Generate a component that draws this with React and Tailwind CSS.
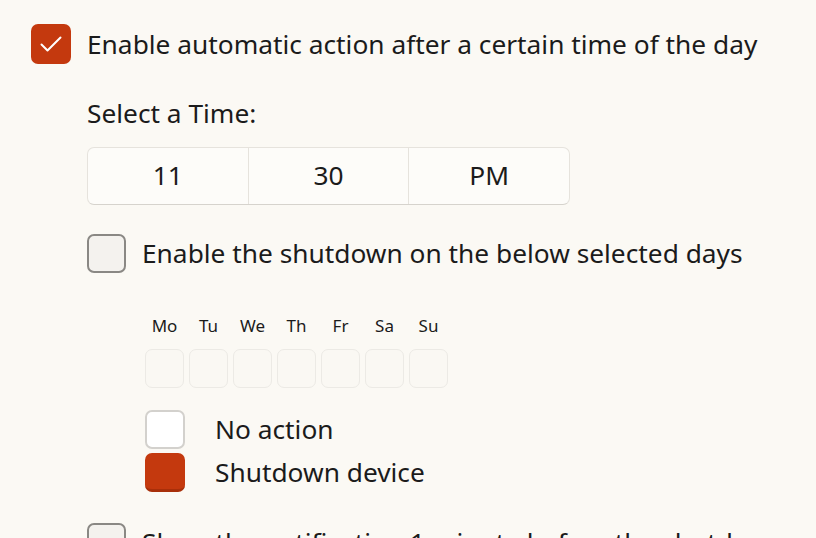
import React from "react";

const font = { fontFamily: '"Noto Sans", "Open Sans", sans-serif' };

function Check() {
  return (
    <svg width="22" height="16" viewBox="0 0 22 16" fill="none">
      <path d="M1.5 8.5l6 6L20.5 1.5" stroke="white" strokeWidth="2" strokeLinecap="round" strokeLinejoin="round" />
    </svg>
  );
}

export default function App() {
  const days = ["Mo", "Tu", "We", "Th", "Fr", "Sa", "Su"];
  return (
    <div className="w-[816px] h-[538px] overflow-hidden bg-[#fbf9f4] text-[#1b1b1b]" style={font}>
      <div className="pl-[31px] pt-[24px]">
        <div className="flex items-center gap-[16px] h-[40px]">
          <div className="w-[40px] h-[40px] rounded-[7px] bg-[#c4390e] flex items-center justify-center">
            <Check />
          </div>
          <span className="text-[26.3px] leading-none">Enable automatic action after a certain time of the day</span>
        </div>

        <div className="pl-[56px]">
          <div className="mt-[30px] h-[40px] flex items-center text-[26.3px]">Select a Time:</div>

          <div className="mt-[13px] w-[483px] h-[58px] flex rounded-[7px] border border-[#e6e3dd] border-b-[#d6d3cd] bg-[#fdfcf9] text-[26.3px]">
            <div className="flex-1 flex items-center justify-center border-r border-[#e6e3dd]">11</div>
            <div className="flex-1 flex items-center justify-center border-r border-[#e6e3dd]">30</div>
            <div className="flex-1 flex items-center justify-center">PM</div>
          </div>

          <div className="mt-[29px] flex items-center gap-[16px] h-[39px]">
            <div className="w-[39px] h-[39px] rounded-[7px] border-2 border-[#8a8884] bg-[#f4f2ee]" />
            <span className="text-[26.3px] leading-none">Enable the shutdown on the below selected days</span>
          </div>

          <div className="pl-[58px] mt-[40px]">
            <div className="flex gap-[5px]">
              {days.map((d) => (
                <div key={d} className="w-[39px] flex flex-col items-center">
                  <div className="h-[26px] flex items-center text-[17px]">{d}</div>
                </div>
              ))}
            </div>
            <div className="flex gap-[5px] mt-[10px]">
              {days.map((d) => (
                <div key={d} className="w-[39px] h-[39px] rounded-[7px] border border-[#eceae5] bg-[#faf8f3]" />
              ))}
            </div>

            <div className="mt-[22px] flex items-center gap-[30px] h-[39px]">
              <div className="w-[40px] h-[39px] rounded-[7px] border-2 border-[#d3d1cd] bg-white" />
              <span className="text-[26.3px] leading-none">No action</span>
            </div>
            <div className="mt-[4px] flex items-center gap-[30px] h-[39px]">
              <div className="w-[40px] h-[39px] rounded-[7px] bg-[#c4390e] border-b-[3px] border-[#a82f0a]" />
              <span className="text-[26.3px] leading-none">Shutdown device</span>
            </div>
          </div>

          <div className="mt-[31px] flex items-center gap-[16px] h-[39px]">
            <div className="w-[39px] h-[39px] rounded-[7px] border-2 border-[#8a8884] bg-[#f4f2ee]" />
            <span className="text-[26.3px] leading-none">Show the notification 1 minute before the shutdown</span>
          </div>
        </div>
      </div>
    </div>
  );
}
